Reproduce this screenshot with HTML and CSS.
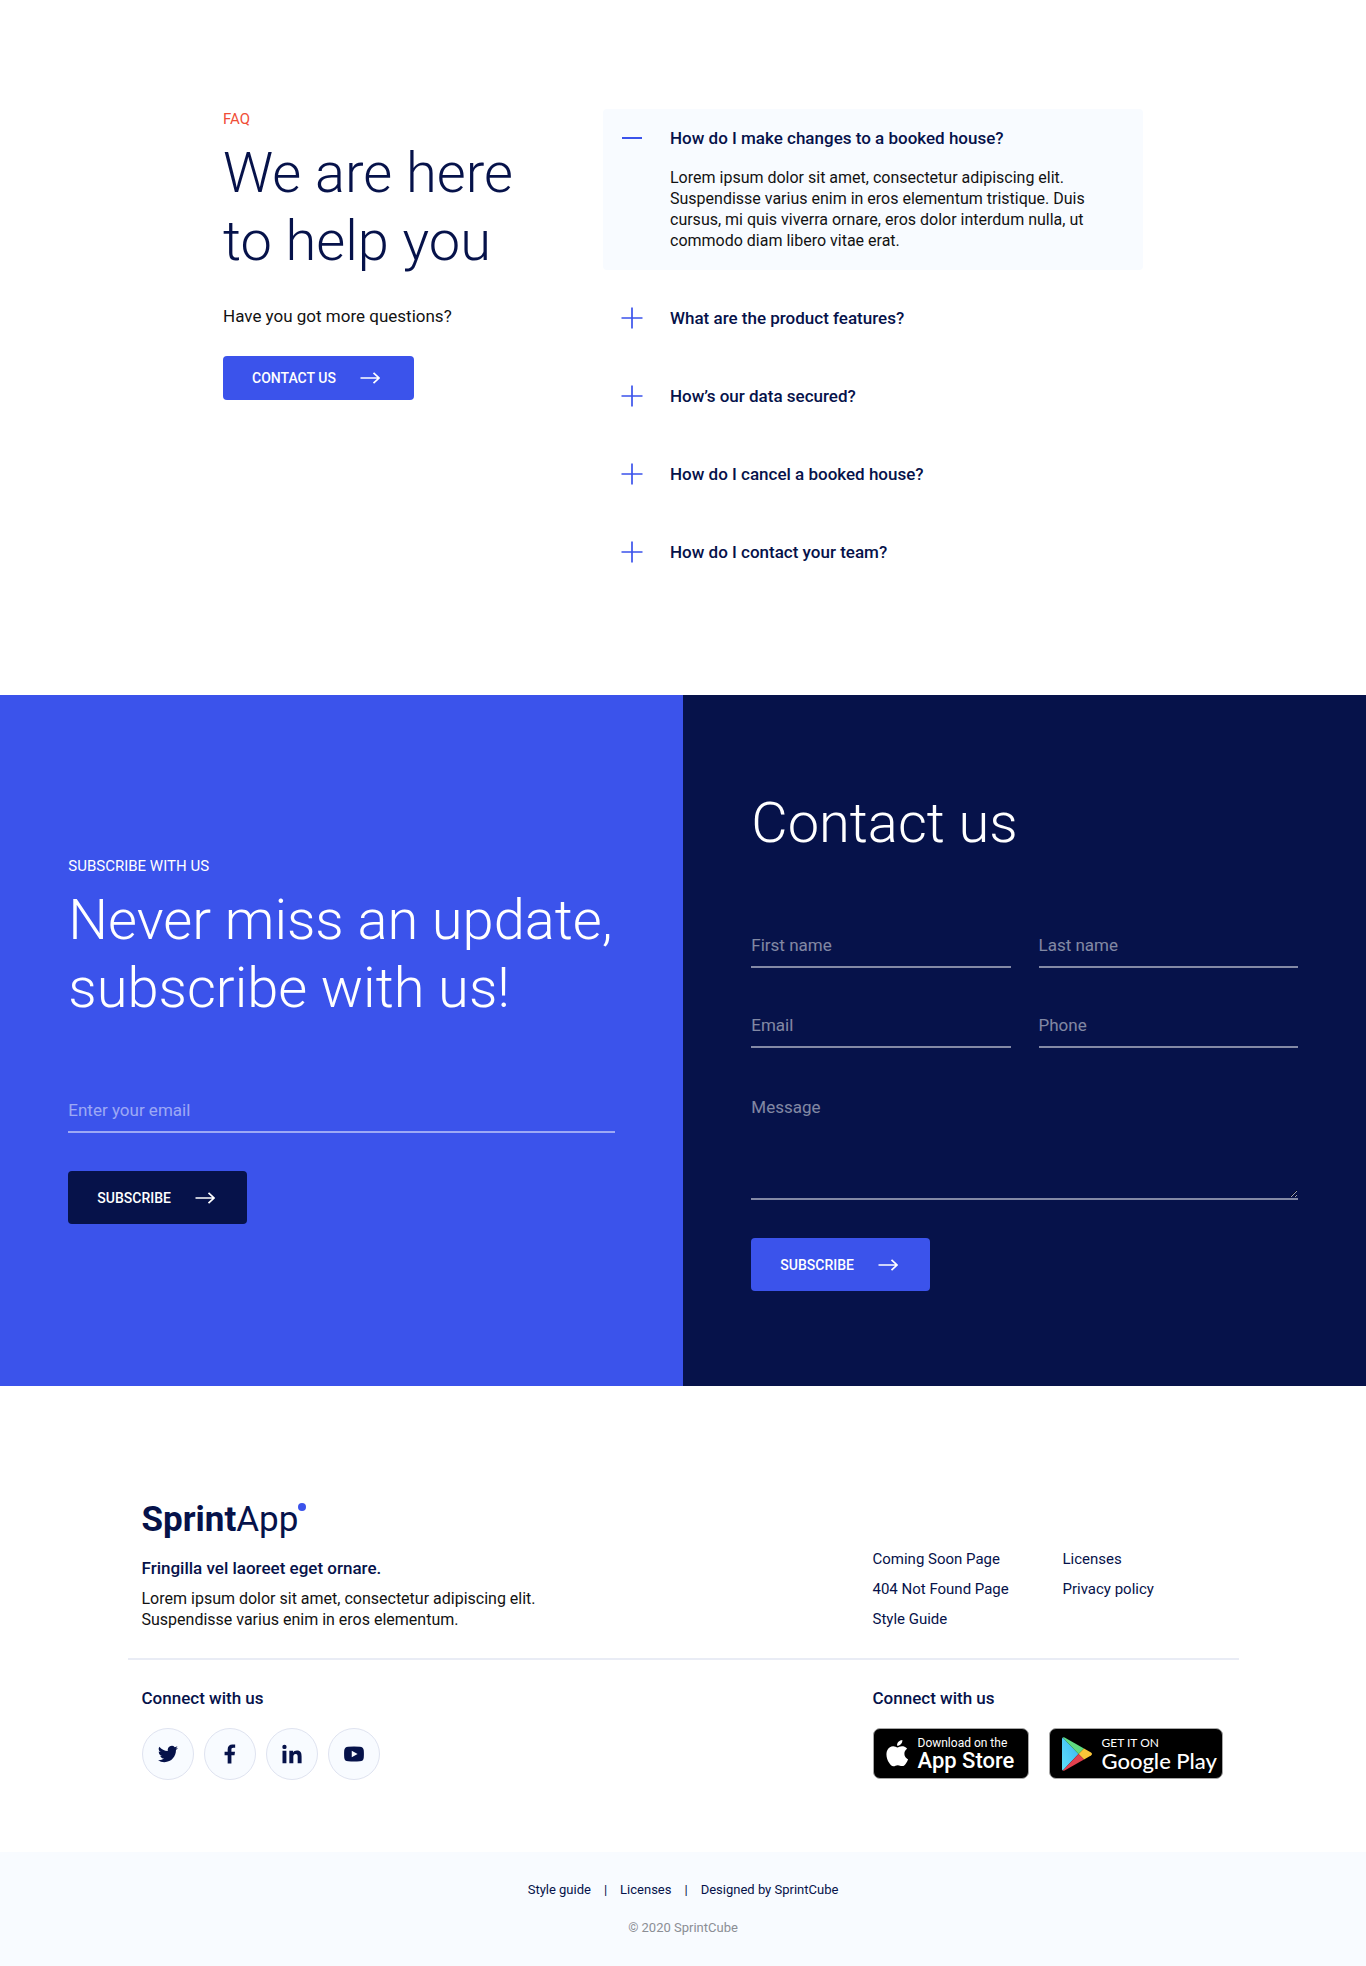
FILE: index.html
```html
<!DOCTYPE html>
<html lang="en">
<head>
<meta charset="utf-8">
<meta name="viewport" content="width=device-width, initial-scale=1">
<title>SprintApp</title>
<link rel="stylesheet" href="styles.css">
</head>
<body>
<svg class="sprite" aria-hidden="true">
  <symbol id="arrow" viewBox="0 0 20 12"><path d="M0.500 6H19M13.500 0.800L19 6L13.500 11.200" fill="none" stroke="currentColor" stroke-width="1.700"/></symbol>
  <symbol id="plus" viewBox="0 0 22 22"><path d="M0.500 11H21.500M11 0.500V21.500" fill="none" stroke="currentColor" stroke-width="1.700"/></symbol>
  <symbol id="minus" viewBox="0 0 22 22"><path d="M1 11H21" fill="none" stroke="currentColor" stroke-width="2"/></symbol>
</svg>

<main>
  <section class="faq">
    <div class="faq-intro">
      <p class="eyebrow eyebrow-red">FAQ</p>
      <h2 class="title">We are here<br>to help you</h2>
      <p class="faq-more">Have you got more questions?</p>
      <a class="button button-slim" href="#contact">CONTACT US <svg class="arrow"><use href="#arrow"/></svg></a>
    </div>
    <div class="faq-list">
      <article class="faq-item faq-item-open">
        <h3><button class="question" type="button" aria-expanded="true"><svg class="toggle"><use href="#minus"/></svg>How do I make changes to a booked house?</button></h3>
        <p class="answer">Lorem ipsum dolor sit amet, consectetur adipiscing elit. Suspendisse varius enim in eros elementum tristique. Duis cursus, mi quis viverra ornare, eros dolor interdum nulla, ut commodo diam libero vitae erat.</p>
      </article>
      <article class="faq-item">
        <h3><button class="question" type="button" aria-expanded="false"><svg class="toggle"><use href="#plus"/></svg>What are the product features?</button></h3>
      </article>
      <article class="faq-item">
        <h3><button class="question" type="button" aria-expanded="false"><svg class="toggle"><use href="#plus"/></svg>How’s our data secured?</button></h3>
      </article>
      <article class="faq-item">
        <h3><button class="question" type="button" aria-expanded="false"><svg class="toggle"><use href="#plus"/></svg>How do I cancel a booked house?</button></h3>
      </article>
      <article class="faq-item">
        <h3><button class="question" type="button" aria-expanded="false"><svg class="toggle"><use href="#plus"/></svg>How do I contact your team?</button></h3>
      </article>
    </div>
  </section>

  <div class="forms">
    <section class="panel panel-subscribe">
      <p class="eyebrow">SUBSCRIBE WITH US</p>
      <h2 class="title">Never miss an update, subscribe with us!</h2>
      <form class="form">
        <input class="field" type="email" placeholder="Enter your email" aria-label="Enter your email">
        <button class="button button-dark" type="submit">SUBSCRIBE <svg class="arrow"><use href="#arrow"/></svg></button>
      </form>
    </section>
    <section class="panel panel-contact" id="contact">
      <h2 class="title">Contact us</h2>
      <form class="form">
        <div class="field-grid">
          <input class="field" type="text" placeholder="First name" aria-label="First name">
          <input class="field" type="text" placeholder="Last name" aria-label="Last name">
          <input class="field" type="email" placeholder="Email" aria-label="Email">
          <input class="field" type="tel" placeholder="Phone" aria-label="Phone">
          <textarea class="field field-area" placeholder="Message" aria-label="Message"></textarea>
        </div>
        <button class="button" type="submit">SUBSCRIBE <svg class="arrow"><use href="#arrow"/></svg></button>
      </form>
    </section>
  </div>
</main>

<footer>
  <div class="footer">
    <div class="footer-row footer-top">
      <div class="about">
        <a class="logo" href="#"><b>Sprint</b>App<span class="logo-dot"></span></a>
        <h4 class="footer-title">Fringilla vel laoreet eget ornare.</h4>
        <p class="about-text">Lorem ipsum dolor sit amet, consectetur adipiscing elit.<br>Suspendisse varius enim in eros elementum.</p>
      </div>
      <nav class="links">
        <a href="#">Coming Soon Page</a>
        <a href="#">Licenses</a>
        <a href="#">404 Not Found Page</a>
        <a href="#">Privacy policy</a>
        <a href="#">Style Guide</a>
      </nav>
    </div>
    <div class="footer-row footer-bottom">
      <div>
        <h4 class="footer-title">Connect with us</h4>
        <div class="socials">
          <a class="social" href="#" aria-label="Twitter"><svg viewBox="0 0 24 24"><path d="M23.950 4.570a10 10 0 0 1-2.820.770 4.960 4.960 0 0 0 2.160-2.720c-.950.550-2 .950-3.130 1.180a4.920 4.920 0 0 0-8.380 4.480C7.690 8.100 4.070 6.130 1.640 3.160a4.920 4.920 0 0 0 1.520 6.570 4.900 4.900 0 0 1-2.230-.610v.060a4.920 4.920 0 0 0 3.950 4.830 5 5 0 0 1-2.210.080 4.940 4.940 0 0 0 4.600 3.420A9.870 9.870 0 0 1 0 19.540a14 14 0 0 0 7.550 2.210c9.050 0 14-7.500 14-13.980 0-.210 0-.420-.020-.630a9.940 9.940 0 0 0 2.460-2.550z"/></svg></a>
          <a class="social" href="#" aria-label="Facebook"><svg viewBox="0 0 24 24"><path d="M9.200 23.500V13.500H5.500V9.200h3.700V6.300C9.200 2.500 11.500.500 14.900.500c1.600 0 2.900.100 3.300.200v3.900h-2.300c-1.800 0-2.200.900-2.200 2.100v2.500h4.300l-.600 4.300h-3.700v10z"/></svg></a>
          <a class="social" href="#" aria-label="LinkedIn"><svg viewBox="0 0 24 24"><path d="M.600 8.200h4.700v14.800H.600zM2.950.900a2.600 2.600 0 1 1 0 5.200 2.600 2.600 0 0 1 0-5.200zM8.800 8.200h4.500v2c.700-1.300 2.300-2.400 4.600-2.400 4.700 0 5.600 3.100 5.600 7.100V23h-4.700v-7.200c0-1.700 0-3.900-2.400-3.900s-2.800 1.800-2.800 3.800V23H8.800z"/></svg></a>
          <a class="social" href="#" aria-label="YouTube"><svg viewBox="0 0 24 24"><path fill-rule="evenodd" d="M5 3.200q7-.600 14 0 4.300.300 4.700 4.400.400 4.400 0 8.800-.400 4.100-4.700 4.400-7 .600-14 0Q.700 20.500.300 16.400q-.400-4.400 0-8.800Q.700 3.500 5 3.200zM9.300 8v8l7-4z"/></svg></a>
        </div>
      </div>
      <div class="apps">
        <h4 class="footer-title">Connect with us</h4>
        <div class="badges">
          <a class="badge badge-apple" href="#">
            <svg viewBox="0 0 24 29"><path d="M20 15.300c0-2.600 2.200-3.900 2.300-4-1.300-1.800-3.200-2.100-3.900-2.100-1.700-.200-3.300 1-4.100 1s-2.200-1-3.600-.900c-1.800 0-3.500 1.100-4.500 2.700-1.900 3.300-.500 8.200 1.400 10.900.900 1.300 2 2.800 3.400 2.700 1.400-.100 1.900-.900 3.600-.900s2.100.900 3.600.800c1.500 0 2.400-1.300 3.300-2.600 1-1.500 1.500-3 1.500-3.100 0 0-3-1.100-3-4.500zM17.200 7.400c.800-.900 1.300-2.200 1.100-3.400-1.100 0-2.400.700-3.200 1.600-.700.800-1.300 2.100-1.100 3.300 1.200.100 2.400-.600 3.200-1.500z" transform="translate(-5 -4) scale(1.220)" fill="#fff"/></svg>
            <span class="badge-text"><small>Download on the</small>App Store</span>
          </a>
          <a class="badge badge-google" href="#">
            <svg viewBox="0 0 30 34"><defs><linearGradient id="play-blue" x1="1" y1="0" x2="0" y2="1"><stop offset="0" stop-color="#3bb4f2"/><stop offset="1" stop-color="#5fe0fb"/></linearGradient></defs><path d="M.800.500L16.500 17L.800 33.500Q0 33 0 32V2Q0 1 .800.500z" fill="url(#play-blue)"/><path d="M.800.500Q1.500 0 2.600.600L22 11.500L16.500 17z" fill="#5fdc80"/><path d="M22 11.500L29 15.600Q31 17 29 18.400L22 22.500L16.500 17z" fill="#fbc639"/><path d="M.800 33.500Q1.500 34 2.600 33.400L22 22.500L16.500 17z" fill="#e2414f"/></svg>
            <span class="badge-text"><small>GET IT ON</small>Google Play</span>
          </a>
        </div>
      </div>
    </div>
  </div>
  <div class="legal">
    <nav class="legal-links">
      <a href="#">Style guide</a><span>|</span><a href="#">Licenses</a><span>|</span><a href="#">Designed by SprintCube</a>
    </nav>
    <p class="copyright">© 2020 SprintCube</p>
  </div>
</footer>
</body>
</html>
```
FILE: styles.css
```css
:root {
  --blue: #3b53eb;
  --navy: #06124a;
  --mist: #f8fbff;
  --ink: #121212;
}

* { box-sizing: border-box; }

body {
  margin: 0;
  background: #fff;
  color: var(--ink);
  font-family: Roboto, "Liberation Sans", sans-serif;
  font-size: 16px;
  line-height: 21px;
}

h2, h3, h4, p { margin: 0; }
a { color: inherit; text-decoration: none; }
svg { display: block; flex: none; }
.sprite { position: absolute; width: 0; height: 0; }

.eyebrow { font-size: 15px; line-height: 20px; }
.eyebrow-red { color: #f04e37; }

.title {
  margin-top: 10px;
  color: var(--navy);
  font-size: 56px;
  font-weight: 300;
  line-height: 68px;
}

.button {
  display: inline-flex;
  align-items: center;
  gap: 24px;
  height: 53px;
  padding: 0 32px 0 29px;
  border: 0;
  border-radius: 4px;
  background: var(--blue);
  color: #fff;
  font: 500 14px/20px Roboto, "Liberation Sans", sans-serif;
  cursor: pointer;
}
.button-slim { height: 44px; padding-right: 34px; }
.button-dark { background: var(--navy); }
.arrow { width: 20px; height: 12px; }

/* FAQ */
.faq {
  display: grid;
  grid-template-columns: 380px 1fr;
  max-width: 920px;
  margin: 0 auto;
  padding: 109px 0 104px;
}
.faq-more { margin: 30px 0 29px; font-size: 17px; line-height: 22px; }
.faq-item { padding: 28px 18px; }
.faq-item-open {
  margin-bottom: 9px;
  padding-top: 18px;
  padding-bottom: 19px;
  border-radius: 4px;
  background: var(--mist);
}
.question {
  display: flex;
  align-items: center;
  gap: 27px;
  width: 100%;
  padding: 0;
  border: 0;
  background: none;
  color: var(--navy);
  font: 500 17px/22px Roboto, "Liberation Sans", sans-serif;
  text-align: left;
  cursor: pointer;
}
.toggle { width: 22px; height: 22px; color: var(--blue); }
.answer { padding: 18px 24px 0 49px; }

/* Forms */
.forms { display: grid; grid-template-columns: 1fr 1fr; }
.panel { padding: 94px 10% 95px; color: #fff; }
.panel .title { color: #fff; }
.panel-subscribe {
  display: flex;
  flex-direction: column;
  justify-content: center;
  background: var(--blue);
}
.panel-contact { background: var(--navy); }
.panel-contact .title { margin-top: 0; }

.form { margin-top: 67px; }
.field {
  display: block;
  width: 100%;
  height: 44px;
  padding: 0;
  border: 0;
  border-bottom: 2px solid rgba(255, 255, 255, 0.5);
  border-radius: 0;
  outline: 0;
  background: none;
  color: #fff;
  font: 400 17px/22px Roboto, "Liberation Sans", sans-serif;
}
.field::placeholder { color: rgba(255, 255, 255, 0.5); opacity: 1; }
.form .button { margin-top: 38px; }
.field-grid { display: grid; grid-template-columns: 1fr 1fr; gap: 36px 28px; }
.field-area { grid-column: 1 / -1; height: 116px; padding-top: 12px; resize: vertical; }

/* Footer */
.footer { max-width: 1111px; margin: 0 auto; padding: 114px 0 72px; }
.footer-row { display: grid; grid-template-columns: 731px 1fr; padding: 0 14px; }
.footer-top { align-items: end; padding-bottom: 28px; border-bottom: 2px solid #e9ecf5; }
.footer-bottom { padding-top: 27px; }
.logo {
  display: flex;
  width: max-content;
  color: var(--navy);
  font-size: 35px;
  line-height: 40px;
}
.logo-dot {
  width: 8px;
  height: 8px;
  margin-top: 3px;
  border-radius: 50%;
  background: var(--blue);
}
.footer-title { color: var(--navy); font-size: 17px; font-weight: 500; line-height: 22px; }
.about .footer-title { margin: 17px 0 9px; }
.links {
  display: grid;
  grid-template-columns: 190px 1fr;
  row-gap: 8px;
  color: var(--navy);
  font-size: 15px;
  line-height: 22px;
}
.socials { display: flex; gap: 10px; margin-top: 19px; }
.social {
  display: grid;
  place-items: center;
  width: 52px;
  height: 52px;
  border: 1px solid #dfe3f0;
  border-radius: 50%;
  background: var(--mist);
}
.social svg { width: 20px; height: 20px; fill: var(--navy); }
.badges { display: flex; gap: 20px; margin-top: 19px; }
.badge {
  display: flex;
  align-items: center;
  height: 51px;
  border: 1px solid #a6a6a6;
  border-radius: 7px;
  background: #000;
  color: #fff;
}
.badge-apple { width: 156px; padding-left: 11px; gap: 9px; }
.badge-apple svg { width: 24px; height: 29px; }
.badge-google { width: 174px; padding-left: 12px; gap: 10px; }
.badge-google svg { width: 30px; height: 34px; }
.badge-text { font-size: 22px; font-weight: 500; line-height: 22px; white-space: nowrap; }
.badge-text small { display: block; font-size: 12px; font-weight: 400; line-height: 14px; }
.badge-google .badge-text { font-family: Lato, sans-serif; }

.legal {
  padding: 27px 0;
  background: var(--mist);
  color: var(--navy);
  font-size: 13px;
  line-height: 22px;
  text-align: center;
}
.legal-links { display: flex; justify-content: center; gap: 13px; }
.copyright { margin-top: 16px; color: #8b8e95; }
```
